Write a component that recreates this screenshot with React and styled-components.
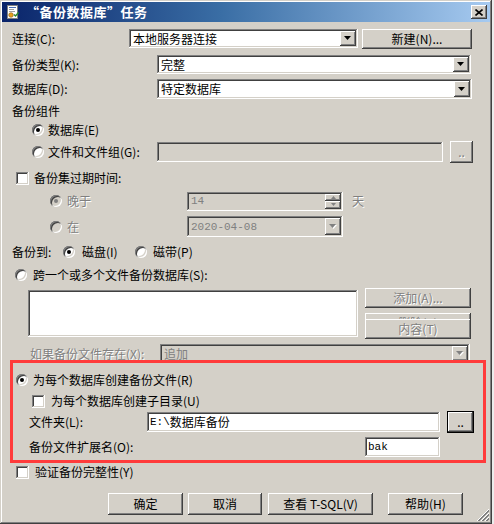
import React from 'react';
import styled, { createGlobalStyle, css } from 'styled-components';

const Global = createGlobalStyle`
  html, body { margin: 0; padding: 0; background: #ececec; }
  body { font-family: "Noto Sans CJK SC", "Noto Sans", sans-serif; font-size: 12px; }
  * { box-sizing: border-box; }
`;

const raised = css`
  box-shadow: inset -1px -1px #404040, inset 1px 1px #ffffff, inset -2px -2px #808080, inset 2px 2px #d4d0c8;
`;
const sunken = css`
  box-shadow: inset -1px -1px #ffffff, inset 1px 1px #808080, inset -2px -2px #d4d0c8, inset 2px 2px #404040;
`;
const defaultRaised = css`
  box-shadow: inset 0 0 0 1px #000, inset -2px -2px #404040, inset 2px 2px #ffffff, inset -3px -3px #808080, inset 3px 3px #d4d0c8;
`;
const disabledText = css`
  color: #808080;
  text-shadow: 1px 1px #ffffff;
`;

const Window = styled.div`
  position: relative;
  width: 492px;
  height: 524px;
  padding: 2px;
  background: #d4d0c8;
  box-shadow: inset -1px -1px #404040, inset 1px 1px #d4d0c8, inset -2px -2px #808080, inset 2px 2px #ffffff;
  font-family: "Noto Sans CJK SC", "Noto Sans", sans-serif;
  font-size: 12px;
  color: #000;
`;

const TitleBar = styled.div`
  display: flex;
  align-items: center;
  height: 20px;
  padding: 0 3px 0 3px;
  background: linear-gradient(to right, #0a246a 0%, #3a6ea5 45%, #a6caf0 100%);
`;

const TitleText = styled.span`
  margin-left: 5px;
  color: #fff;
  font-weight: bold;
  font-size: 13px;
  line-height: 16px;
  letter-spacing: 0.5px;
  white-space: nowrap;
`;

const CloseBtn = styled.span`
  margin-left: auto;
  width: 16px;
  height: 14px;
  display: flex;
  align-items: center;
  justify-content: center;
  background: #d4d0c8;
  ${raised}
`;

const Body = styled.div`
  display: flex;
  flex-direction: column;
  padding: 6px 0 0 10px;
`;

const Row = styled.div`
  display: flex;
  align-items: ${p => p.$align || 'center'};
  height: ${p => p.$h}px;
  margin-top: ${p => p.$mt || 0}px;
  padding-left: ${p => p.$pl || 0}px;
  gap: ${p => p.$gap || 0}px;
`;

const Label = styled.span`
  flex: none;
  width: ${p => (p.$w ? `${p.$w}px` : 'auto')};
  margin-left: ${p => p.$ml || 0}px;
  line-height: 14px;
  white-space: nowrap;
  color: #000;
  ${p => p.$disabled && disabledText}
`;

const Option = styled.span`
  flex: none;
  display: flex;
  align-items: center;
  gap: ${p => p.$gap || 4}px;
  width: ${p => (p.$w ? `${p.$w}px` : 'auto')};
`;

const RadioDot = styled.span`
  flex: none;
  position: relative;
  width: 12px;
  height: 12px;
  border-radius: 50%;
  background: ${p => (p.$disabled ? '#d4d0c8' : '#ffffff')};
  box-shadow: inset 1px 1px #808080, inset -1px -1px #ffffff, inset 2px 2px #404040, inset -2px -2px #d4d0c8;
  &::after {
    content: '';
    display: ${p => (p.$checked ? 'block' : 'none')};
    position: absolute;
    left: 4px;
    top: 4px;
    width: 4px;
    height: 4px;
    border-radius: 50%;
    background: ${p => (p.$disabled ? '#808080' : '#000')};
  }
`;

const CheckBox = styled.span`
  flex: none;
  width: 13px;
  height: 13px;
  background: #fff;
  ${sunken}
`;

const Field = styled.div`
  flex: none;
  display: flex;
  align-items: stretch;
  width: ${p => p.$w}px;
  height: ${p => p.$h || 20}px;
  padding: 2px;
  background: ${p => (p.$disabled ? '#d4d0c8' : '#ffffff')};
  ${sunken}
`;

const FieldText = styled.span`
  flex: 1;
  display: flex;
  align-items: center;
  padding-left: ${p => (p.$pl !== undefined ? p.$pl : 2)}px;
  white-space: nowrap;
  overflow: hidden;
  line-height: 14px;
  color: ${p => (p.$disabled ? '#808080' : '#000')};
`;

const Mono = styled.span`
  font-family: "Liberation Mono", "DejaVu Sans Mono", monospace;
  font-size: 11px;
`;

const DropBtn = styled.span`
  flex: none;
  width: 16px;
  display: flex;
  align-items: center;
  justify-content: center;
  background: #d4d0c8;
  ${raised}
`;

const SpinCol = styled.span`
  flex: none;
  width: 16px;
  display: flex;
  flex-direction: column;
`;

const SpinBtn = styled.span`
  flex: 1;
  display: flex;
  align-items: center;
  justify-content: center;
  background: #d4d0c8;
  ${raised}
`;

const Btn = styled.span`
  flex: none;
  display: flex;
  align-items: center;
  justify-content: center;
  width: ${p => p.$w}px;
  height: ${p => p.$h || 22}px;
  margin-top: ${p => p.$mt || 0}px;
  position: ${p => (p.$over ? 'relative' : 'static')};
  background: #d4d0c8;
  line-height: 14px;
  white-space: nowrap;
  color: #000;
  ${p => (p.$default ? defaultRaised : raised)}
  ${p => p.$disabled && disabledText}
`;

const ListBox = styled.div`
  flex: none;
  width: 330px;
  height: 47px;
  margin-top: 2px;
  background: #fff;
  ${sunken}
`;

const BtnCol = styled.div`
  flex: none;
  display: flex;
  flex-direction: column;
  width: 106px;
`;

const RedBox = styled.div`
  position: relative;
  z-index: 1;
  display: flex;
  flex-direction: column;
  width: 476px;
  height: 103px;
  margin: -3px 0 0 -2px;
  padding-top: 10px;
  border: 3px solid #ff3b3b;
`;

const Grip = styled.svg`
  position: absolute;
  right: 3px;
  bottom: 3px;
`;

const Arrow = ({ disabled }) => (
  <svg width="8" height="5" viewBox="0 0 8 5">
    {disabled && <polygon points="1,1 8,1 4.5,5" fill="#fff" />}
    <polygon points="0,0 7,0 3.5,4" fill={disabled ? '#808080' : '#000'} />
  </svg>
);

const SmallArrow = ({ up }) => (
  <svg width="5" height="3" viewBox="0 0 5 3">
    <polygon points={up ? '2.5,0 5,3 0,3' : '0,0 5,0 2.5,3'} fill="#808080" />
  </svg>
);

const Combo = ({ w, h, disabled, children }) => (
  <Field $w={w} $h={h} $disabled={disabled}>
    <FieldText $disabled={disabled}>{children}</FieldText>
    <DropBtn>
      <Arrow disabled={disabled} />
    </DropBtn>
  </Field>
);

const Radio = ({ checked, disabled, children, w, gap }) => (
  <Option $w={w} $gap={gap}>
    <RadioDot $checked={checked} $disabled={disabled} />
    <Label $disabled={disabled}>{children}</Label>
  </Option>
);

const Check = ({ children, gap }) => (
  <Option $gap={gap}>
    <CheckBox />
    <Label>{children}</Label>
  </Option>
);

const TaskIcon = () => (
  <svg width="16" height="16" viewBox="0 0 16 16">
    <rect x="2.5" y="1.5" width="10" height="13" fill="#fff" stroke="#808080" />
    <rect x="4" y="3" width="7" height="1" fill="#4a6fb5" />
    <rect x="4" y="5" width="5" height="1" fill="#a0a0a0" />
    <rect x="4" y="7" width="6" height="1" fill="#a0a0a0" />
    <circle cx="6" cy="11" r="2.3" fill="#e8a020" stroke="#8a5a10" strokeWidth="0.6" />
    <path d="M9 10.5l1.5 1.5 3-3.5" stroke="#2a8a2a" strokeWidth="1.4" fill="none" />
  </svg>
);

export default function App() {
  return (
    <>
      <Global />
      <Window>
        <TitleBar>
          <TaskIcon />
          <TitleText>“备份数据库”任务</TitleText>
          <CloseBtn>
            <svg width="8" height="7" viewBox="0 0 8 7">
              <path d="M0.5 0.5L7.5 6.5M7.5 0.5L0.5 6.5" stroke="#000" strokeWidth="1.6" />
            </svg>
          </CloseBtn>
        </TitleBar>

        <Body>
          <Row $h={21}>
            <Label $w={117}>连接(C):</Label>
            <Combo w={229} h={19}>本地服务器连接</Combo>
            <Btn $w={110} $h={20} style={{ marginLeft: 4 }}>新建(N)...</Btn>
          </Row>

          <Row $h={19} $mt={6}>
            <Label $w={145}>备份类型(K):</Label>
            <Combo w={314} h={19}>完整</Combo>
          </Row>

          <Row $h={20} $mt={5}>
            <Label $w={145}>数据库(D):</Label>
            <Combo w={315} h={20}>特定数据库</Combo>
          </Row>

          <Row $h={14} $mt={5}>
            <Label>备份组件</Label>
          </Row>

          <Row $h={14} $mt={5} $pl={20}>
            <Radio checked>数据库(E)</Radio>
          </Row>

          <Row $h={22} $mt={4} $pl={20}>
            <Radio w={125}>文件和文件组(G):</Radio>
            <Field $w={286} $h={20} $disabled />
            <Btn $w={23} $h={22} $disabled style={{ marginLeft: 7 }}>..</Btn>
          </Row>

          <Row $h={14} $mt={8} $pl={4}>
            <Check gap={5}>备份集过期时间:</Check>
          </Row>

          <Row $h={20} $mt={6} $pl={38}>
            <Radio checked disabled w={137} gap={5}>晚于</Radio>
            <Field $w={156} $h={19} $disabled>
              <FieldText $disabled><Mono>14</Mono></FieldText>
              <SpinCol>
                <SpinBtn><SmallArrow up /></SpinBtn>
                <SpinBtn><SmallArrow /></SpinBtn>
              </SpinCol>
            </Field>
            <Label $disabled $ml={9}>天</Label>
          </Row>

          <Row $h={21} $mt={5} $pl={38}>
            <Radio disabled w={137} gap={5}>在</Radio>
            <Combo w={156} h={21} disabled><Mono>2020-04-08</Mono></Combo>
          </Row>

          <Row $h={14} $mt={8}>
            <Label $w={51}>备份到:</Label>
            <Radio checked w={72} gap={7}>磁盘(I)</Radio>
            <Radio gap={6}>磁带(P)</Radio>
          </Row>

          <Row $h={14} $mt={9} $pl={3}>
            <Radio gap={6}>跨一个或多个文件备份数据库(S):</Radio>
          </Row>

          <Row $h={51} $mt={6} $pl={16} $gap={7} $align="flex-start">
            <ListBox />
            <BtnCol>
              <Btn $w={106} $h={20} $disabled>添加(A)...</Btn>
              <Btn $w={106} $h={20} $mt={5} $disabled>删除(R)</Btn>
              <Btn $w={106} $h={20} $mt={-14} $over $disabled>内容(T)</Btn>
            </BtnCol>
          </Row>

          <Row $h={19} $mt={5} $pl={18}>
            <Label $w={130} $disabled>如果备份文件存在(X):</Label>
            <Combo w={310} h={19} disabled>追加</Combo>
          </Row>

          <RedBox>
            <Row $h={14} $pl={3}>
              <Radio checked gap={5}>为每个数据库创建备份文件(R)</Radio>
            </Row>
            <Row $h={14} $mt={7} $pl={19}>
              <Check gap={6}>为每个数据库创建子目录(U)</Check>
            </Row>
            <Row $h={22} $mt={3} $pl={16}>
              <Label $w={118}>文件夹(L):</Label>
              <Field $w={293} $h={20}>
                <FieldText $pl={1}><Mono>E:\</Mono>数据库备份</FieldText>
              </Field>
              <Btn $w={27} $h={22} $default style={{ marginLeft: 7 }}>..</Btn>
            </Row>
            <Row $h={20} $mt={4} $pl={16}>
              <Label $w={336}>备份文件扩展名(O):</Label>
              <Field $w={75} $h={20}>
                <FieldText $pl={1}><Mono>bak</Mono></FieldText>
              </Field>
            </Row>
          </RedBox>

          <Row $h={14} $mt={2} $pl={4}>
            <Check gap={6}>验证备份完整性(Y)</Check>
          </Row>

          <Row $h={22} $mt={14} $pl={96}>
            <Btn $w={75}>确定</Btn>
            <Btn $w={74} style={{ marginLeft: 5 }}>取消</Btn>
            <Btn $w={105} style={{ marginLeft: 6 }}>查看 T-SQL(V)</Btn>
            <Btn $w={75} style={{ marginLeft: 15 }}>帮助(H)</Btn>
          </Row>
        </Body>

        <Grip width="13" height="13" viewBox="0 0 13 13">
          <path d="M13 1L1 13M13 5L5 13M13 9L9 13" stroke="#fff" strokeWidth="1" />
          <path d="M13 2L2 13M13 3L3 13M13 6L6 13M13 7L7 13M13 10L10 13M13 11L11 13" stroke="#808080" strokeWidth="1" />
        </Grip>
      </Window>
    </>
  );
}
